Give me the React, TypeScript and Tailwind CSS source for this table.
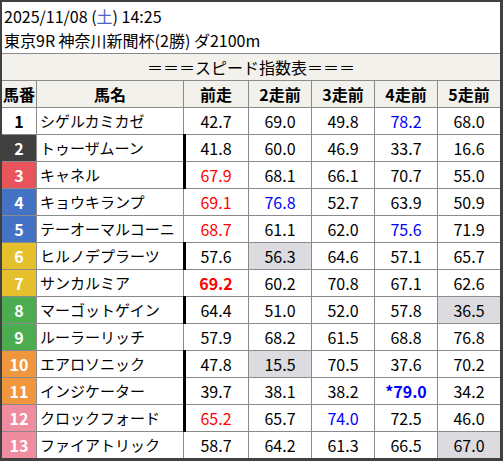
import React from "react";

type Cell = { v: string; c?: "r" | "b"; bold?: boolean; g?: boolean };
type Row = { n: number; name: string; bg: string; fg: string; bar?: boolean; cells: Cell[] };

const rows: Row[] = [
  { n: 1, name: "シゲルカミカゼ", bg: "bg-white", fg: "text-black", cells: [{ v: "42.7" }, { v: "69.0" }, { v: "49.8" }, { v: "78.2", c: "b" }, { v: "68.0" }] },
  { n: 2, name: "トゥーザムーン", bg: "bg-[#404040]", fg: "text-white", bar: true, cells: [{ v: "41.8" }, { v: "60.0" }, { v: "46.9" }, { v: "33.7" }, { v: "16.6" }] },
  { n: 3, name: "キャネル", bg: "bg-[#e8545a]", fg: "text-white", bar: true, cells: [{ v: "67.9", c: "r" }, { v: "68.1" }, { v: "66.1" }, { v: "70.7" }, { v: "55.0" }] },
  { n: 4, name: "キョウキランプ", bg: "bg-[#4472c4]", fg: "text-white", cells: [{ v: "69.1", c: "r" }, { v: "76.8", c: "b" }, { v: "52.7" }, { v: "63.9" }, { v: "50.9" }] },
  { n: 5, name: "テーオーマルコーニ", bg: "bg-[#4472c4]", fg: "text-white", cells: [{ v: "68.7", c: "r" }, { v: "61.1" }, { v: "62.0" }, { v: "75.6", c: "b" }, { v: "71.9" }] },
  { n: 6, name: "ヒルノデプラーツ", bg: "bg-[#e6c02c]", fg: "text-white", bar: true, cells: [{ v: "57.6" }, { v: "56.3", g: true }, { v: "64.6" }, { v: "57.1" }, { v: "65.7" }] },
  { n: 7, name: "サンカルミア", bg: "bg-[#e6c02c]", fg: "text-white", cells: [{ v: "69.2", c: "r", bold: true }, { v: "60.2" }, { v: "70.8" }, { v: "67.1" }, { v: "62.6" }] },
  { n: 8, name: "マーゴットゲイン", bg: "bg-[#4cad50]", fg: "text-white", bar: true, cells: [{ v: "64.4" }, { v: "51.0" }, { v: "52.0" }, { v: "57.8" }, { v: "36.5", g: true }] },
  { n: 9, name: "ルーラーリッチ", bg: "bg-[#4cad50]", fg: "text-white", cells: [{ v: "57.9" }, { v: "68.2" }, { v: "61.5" }, { v: "68.8" }, { v: "76.8" }] },
  { n: 10, name: "エアロソニック", bg: "bg-[#f0963c]", fg: "text-white", bar: true, cells: [{ v: "47.8" }, { v: "15.5", g: true }, { v: "70.5" }, { v: "37.6" }, { v: "70.2" }] },
  { n: 11, name: "インジケーター", bg: "bg-[#f0963c]", fg: "text-white", bar: true, cells: [{ v: "39.7" }, { v: "38.1" }, { v: "38.2" }, { v: "*79.0", c: "b", bold: true }, { v: "34.2" }] },
  { n: 12, name: "クロックフォード", bg: "bg-[#f08ca0]", fg: "text-white", bar: true, cells: [{ v: "65.2", c: "r" }, { v: "65.7" }, { v: "74.0", c: "b" }, { v: "72.5" }, { v: "46.0" }] },
  { n: 13, name: "ファイアトリック", bg: "bg-[#f08ca0]", fg: "text-white", cells: [{ v: "58.7" }, { v: "64.2" }, { v: "61.3" }, { v: "66.5" }, { v: "67.0", g: true }] },
];

const headers = ["馬番", "馬名", "前走", "2走前", "3走前", "4走前", "5走前"];

export default function App() {
  return (
    <div
      className="w-[503px] h-[461px] bg-white border-[#404040] border-t-2 border-l-2 border-r-[3px] border-b-[3px] flex flex-col overflow-hidden text-black"
      style={{ fontFamily: '"Noto Sans CJK JP", "Noto Sans", sans-serif' }}
    >
      <div className="h-[52px] border-b border-[#8a8a8a] flex flex-col justify-center pl-[2px] text-[16px] leading-[24px] shrink-0">
        <div>
          2025/11/08 (<span className="text-[#4a66c4]">土</span>) 14:25
        </div>
        <div>東京9R 神奈川新聞杯(2勝) ダ2100m</div>
      </div>
      <div className="h-[27px] border-b border-[#8a8a8a] bg-[#f3f1ec] flex items-center justify-center text-[16px] shrink-0">
        ＝＝＝スピード指数表＝＝＝
      </div>
      <div className="grid grid-cols-[34px_146px_64px_62px_62px_62px_62px] auto-rows-[26px] gap-px bg-[#8a8a8a]">
        {headers.map((h) => (
          <div key={h} className="bg-[#f3f1ec] flex items-center justify-center font-bold text-[16px]">
            {h}
          </div>
        ))}
        {rows.map((r) => (
          <React.Fragment key={r.n}>
            <div className={`${r.bg} ${r.fg} flex items-center justify-center font-bold text-[16px]`}>{r.n}</div>
            <div className="bg-white flex items-center pl-[3px] text-[15px] whitespace-nowrap overflow-hidden">{r.name}</div>
            {r.cells.map((c, i) => (
              <div
                key={i}
                className={`relative flex items-center justify-center text-[16px] ${c.g ? "bg-[#dcdce0]" : "bg-white"} ${
                  c.c === "r" ? "text-[#ff0000]" : c.c === "b" ? "text-[#0000ff]" : "text-black"
                } ${c.bold ? "font-bold" : ""}`}
              >
                {i === 0 && r.bar && <span className="absolute left-[-1px] top-[-1px] bottom-[-1px] w-[3px] bg-black" />}
                {c.v}
              </div>
            ))}
          </React.Fragment>
        ))}
      </div>
    </div>
  );
}
